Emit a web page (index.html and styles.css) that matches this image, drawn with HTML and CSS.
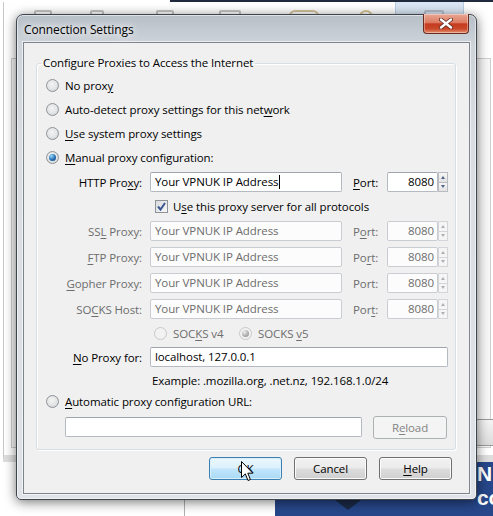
FILE: index.html
```html
<!DOCTYPE html>
<html lang="en">
<head>
    <meta charset="UTF-8">
    <title>Connection Settings</title>
    <link rel="stylesheet" href="styles.css">
</head>
<body>
<div class="desktop">
    <!-- options window behind the dialog -->
    <div class="bg-line"></div>
    <div class="bg-win">
        <div class="bg-tab"></div>
        <div class="bg-icons">
            <span class="ico i1"></span><span class="ico i2"></span><span class="ico i3"></span>
            <span class="ico i4"></span><span class="ico i5"></span><span class="ico i6"></span>
            <span class="ico i7"></span>
        </div>
        <div class="bg-panel">
            <div class="bg-btn"></div>
        </div>
    </div>
    <div class="bg-blue">
        <div class="bg-mark"></div>
        <div class="bg-text">N<br>co</div>
    </div>
    <div class="bg-vline"></div>

    <div class="dialog">
        <div class="titlebar">
            <span class="title">Connection Settings</span>
            <div class="close">
                <svg width="14" height="11" viewBox="0 0 14 11">
                    <path d="M2 1.5 L12 9.5 M12 1.5 L2 9.5" stroke="#5a2a20" stroke-width="4" stroke-linecap="round"/>
                    <path d="M2 1.5 L12 9.5 M12 1.5 L2 9.5" stroke="#fff" stroke-width="2.4" stroke-linecap="round"/>
                </svg>
            </div>
        </div>
        <div class="client">
            <fieldset class="group">
                <legend>Configure Proxies to Access the Internet</legend>

                <div class="opt"><span class="radio"></span><span>No prox<u>y</u></span></div>
                <div class="opt"><span class="radio"></span><span>Auto-detect proxy settings for this net<u>w</u>ork</span></div>
                <div class="opt"><span class="radio"></span><span><u>U</u>se system proxy settings</span></div>
                <div class="opt"><span class="radio on"></span><span><u>M</u>anual proxy configuration:</span></div>

                <div class="prow">
                    <span class="plabel">HTTP Pro<u>x</u>y:</span>
                    <div class="field host"><span>Your VPNUK IP Address</span><span class="caret"></span></div>
                    <span class="portlabel"><u>P</u>ort:</span>
                    <div class="field port">8080</div>
                    <div class="spin"><span class="up"></span><span class="down"></span></div>
                </div>

                <div class="checkrow">
                    <span class="check">
                        <svg width="11" height="11" viewBox="0 0 11 11"><path d="M2 5.5 L4.5 8.5 L9 2" fill="none" stroke="#3d5792" stroke-width="2"/></svg>
                    </span>
                    <span>U<u>s</u>e this proxy server for all protocols</span>
                </div>

                <div class="prow dis">
                    <span class="plabel">SS<u>L</u> Proxy:</span>
                    <div class="field host">Your VPNUK IP Address</div>
                    <span class="portlabel">P<u>o</u>rt:</span>
                    <div class="field port">8080</div>
                    <div class="spin"><span class="up"></span><span class="down"></span></div>
                </div>
                <div class="prow dis">
                    <span class="plabel"><u>F</u>TP Proxy:</span>
                    <div class="field host">Your VPNUK IP Address</div>
                    <span class="portlabel">Po<u>r</u>t:</span>
                    <div class="field port">8080</div>
                    <div class="spin"><span class="up"></span><span class="down"></span></div>
                </div>
                <div class="prow dis">
                    <span class="plabel"><u>G</u>opher Proxy:</span>
                    <div class="field host">Your VPNUK IP Address</div>
                    <span class="portlabel">Port:</span>
                    <div class="field port">8080</div>
                    <div class="spin"><span class="up"></span><span class="down"></span></div>
                </div>
                <div class="prow dis">
                    <span class="plabel">SO<u>C</u>KS Host:</span>
                    <div class="field host">Your VPNUK IP Address</div>
                    <span class="portlabel">Por<u>t</u>:</span>
                    <div class="field port">8080</div>
                    <div class="spin"><span class="up"></span><span class="down"></span></div>
                </div>

                <div class="socksrow dis">
                    <div class="socksopt"><span class="radio"></span><span>SOC<u>K</u>S v4</span></div>
                    <div class="socksopt"><span class="radio on"></span><span>SOCKS <u>v</u>5</span></div>
                </div>

                <div class="prow">
                    <span class="plabel"><u>N</u>o Proxy for:</span>
                    <div class="field wide">localhost, 127.0.0.1</div>
                </div>
                <div class="example">Example: .mozilla.org, .net.nz, 192.168.1.0/24</div>

                <div class="opt auto"><span class="radio"></span><span><u>A</u>utomatic proxy configuration URL:</span></div>
                <div class="urlrow">
                    <div class="field url"></div>
                    <button class="btn reload" disabled>R<u>e</u>load</button>
                </div>
            </fieldset>

            <div class="buttons">
                <button class="btn def">OK</button>
                <button class="btn">Cancel</button>
                <button class="btn"><u>H</u>elp</button>
            </div>
        </div>
    </div>

    <svg class="cursor" width="13" height="21" viewBox="0 0 13 21">
        <path d="M0.5 0.5 L0.5 16.5 L4.3 12.9 L7 19.5 L9.4 18.5 L6.8 12.2 L11.8 12.2 Z" fill="#fff" stroke="#000" stroke-width="1"/>
    </svg>
</div>
</body>
</html>
```

FILE: styles.css
```css
* { box-sizing: border-box; }
body { margin: 0; font-family: "Open Sans", "Noto Sans", sans-serif; font-size: 11.5px; letter-spacing: -0.1px; color: #000; }
u { text-decoration-thickness: 1px; text-underline-offset: 2px; }

.desktop { position: relative; width: 493px; height: 516px; overflow: hidden; background: #fff; }

/* background windows */
.bg-line { position: absolute; left: 170px; top: 0; width: 330px; height: 2px; background: #1f2b3c; }
.bg-win { position: absolute; left: 3px; top: 2px; width: 500px; height: 460px; border-left: 1px solid #c8c8c8; border-bottom: 7px solid #dedede; background: #fff; }
.bg-tab { position: absolute; left: 391px; top: 0; width: 69px; height: 44px; background: #dae6f4; border: 1px solid #b8cde6; border-top: 0; }
.bg-icons .ico { position: absolute; top: 8px; width: 18px; height: 12px; border: 2px solid #c4c4c4; border-radius: 2px; }
.bg-icons .i1 { left: 30px; }
.bg-icons .i2 { left: 86px; width: 14px; }
.bg-icons .i3 { left: 152px; }
.bg-icons .i4 { left: 215px; width: 22px; }
.bg-icons .i5 { left: 285px; width: 30px; border-radius: 8px; border-color: #d2c29a; }
.bg-icons .i6 { left: 355px; width: 14px; border-radius: 7px 7px 0 0; border-color: #d8c690; }
.bg-icons .i7 { left: 420px; width: 20px; border-color: #b4bcc8; }
.bg-panel { position: absolute; left: 7px; top: 56px; width: 480px; height: 390px; border: 1px solid #cfcfcf; background: #f7f7f7; }
.bg-btn { position: absolute; left: 463px; top: 360px; width: 30px; height: 27px; border: 1px solid #9a9a9a; border-radius: 3px; background: linear-gradient(#f4f4f4, #dcdcdc); }
.bg-blue { position: absolute; left: 275px; top: 462px; width: 218px; height: 54px; background: #27478a; }
.bg-mark { position: absolute; left: 60px; top: 38px; width: 26px; height: 10px; background: #1b2a48; clip-path: polygon(0 0, 100% 0, 50% 100%); }
.bg-text { position: absolute; left: 202px; top: 0; color: #fff; font-family: "Liberation Sans", sans-serif; font-weight: bold; font-size: 21px; line-height: 24px; }
.bg-vline { position: absolute; left: 184px; top: 500px; width: 1px; height: 16px; background: #b0b0b0; }

/* dialog */
.dialog {
    position: absolute; left: 16px; top: 14px; width: 461px; height: 486px;
    border: 1px solid #3f454c; border-radius: 7px 7px 5px 5px;
    background: linear-gradient(#b7bfc7, #cdd3d9 28px, #d9dde2 120px, #dfe2e6);
    box-shadow: 0 2px 12px rgba(0, 0, 0, 0.55), inset 0 0 0 1px rgba(255, 255, 255, 0.55);
    padding: 0 6px 5px 6px;
}
.titlebar { display: flex; justify-content: space-between; align-items: flex-start; height: 27px; }
.title { margin: 7px 0 0 1px; line-height: 16px; font-size: 12px; text-shadow: 0 0 6px #fff, 0 0 10px #fff; }
.close {
    width: 46px; height: 20px; margin: -1px 1px 0 0;
    display: flex; align-items: center; justify-content: center;
    border: 1px solid #6b2a1f; border-top: 0; border-radius: 0 0 4px 4px;
    background: linear-gradient(#e9a895 0%, #dc7b62 45%, #c63b1f 52%, #c9472a 78%, #e4906f 100%);
    box-shadow: inset 0 0 0 1px rgba(255, 255, 255, 0.35);
}
.client { height: 452px; border: 1px solid #7d848c; background: #f0f0f0; box-shadow: 0 0 0 1px rgba(255, 255, 255, 0.6); }

.group {
    margin: 12px 0 0 12px; width: 420px; min-width: 0;
    padding: 2px 0 5px 0;
    border: 1px solid #d5dfe5; border-radius: 3px;
    box-shadow: inset 1px 1px 0 #fff, 1px 1px 0 #fff;
}
.group legend { margin-left: 4px; padding: 0 2px; line-height: 16px; }

.opt { display: flex; align-items: center; gap: 6px; height: 24px; padding-left: 9px; }
.radio {
    position: relative; flex: none; width: 13px; height: 13px; border-radius: 50%;
    border: 1px solid #8e9398;
    background: radial-gradient(circle at 45% 40%, #f4f4f4 0%, #e2e3e4 55%, #c9cbcd 100%);
}
.radio.on::after {
    content: ""; position: absolute; left: 2px; top: 2px; width: 7px; height: 7px; border-radius: 50%;
    background: radial-gradient(circle at 35% 30%, #9bdcf7 0%, #2c76b8 50%, #123f78 100%);
}

.prow { display: flex; align-items: center; height: 26px; }
.plabel { width: 105px; margin-right: 8px; text-align: right; }
.field {
    height: 20px; padding: 0 4px; line-height: 18px; white-space: nowrap; overflow: hidden;
    background: #fff; border: 1px solid #b5bac2; border-top-color: #a0a5ad; border-radius: 2px;
}
.host { width: 192px; }
.caret { display: inline-block; width: 1px; height: 14px; margin-left: 1px; vertical-align: -3px; background: #000; }
.portlabel { width: 34px; margin-left: 11px; }
.port { width: 51px; text-align: right; padding-right: 3px; }
.spin { display: flex; flex-direction: column; width: 10px; height: 20px; }
.spin span { flex: 1; border: 1px solid #b8bcc2; background: linear-gradient(#f6f6f6, #e2e2e2); position: relative; }
.spin .down { border-top: 0; }
.spin span::after {
    content: ""; position: absolute; left: 2px; top: 3px;
    border-left: 2.5px solid transparent; border-right: 2.5px solid transparent;
}
.spin .up::after { border-bottom: 3px solid #4d6185; }
.spin .down::after { top: 2px; border-top: 3px solid #4d6185; }

.dis { color: #6d6d6d; }
.dis .field { color: #6d6d6d; border-color: #c9cdd2; background: #fcfcfc; }
.dis .spin span { border-color: #d3d5d8; background: #f5f5f5; }
.dis .spin .up::after { border-bottom-color: #b0b0b0; }
.dis .spin .down::after { border-top-color: #b0b0b0; }
.dis .radio { border-color: #c6c8ca; background: #f2f2f2; }
.dis .radio.on::after { background: radial-gradient(circle at 35% 30%, #f0f0f0 0%, #aaaaaa 60%, #8a8a8a 100%); }

.checkrow { display: flex; align-items: center; gap: 5px; height: 23px; padding-left: 118px; }
.check {
    flex: none; width: 13px; height: 13px; display: flex; align-items: center; justify-content: center;
    border: 1px solid #8e9398; background: linear-gradient(135deg, #d8dadc, #f8f8f8);
}

.socksrow { display: flex; align-items: center; height: 22px; padding-left: 117px; }
.socksopt { display: flex; align-items: center; gap: 6px; width: 85px; }

.wide { width: 298px; }
.example { height: 22px; line-height: 22px; padding-left: 115px; }
.opt.auto { height: 18px; }
.urlrow { display: flex; align-items: center; height: 34px; padding-left: 28px; }
.url { width: 297px; }

.btn {
    width: 73px; height: 23px; padding: 0; font: inherit; letter-spacing: inherit; color: #000;
    border: 1px solid #707070; border-radius: 3px;
    background: linear-gradient(#f2f2f2 0%, #ebebeb 48%, #dddddd 52%, #cfcfcf 100%);
    box-shadow: inset 0 0 0 1px #fbfbfb;
}
.btn.def {
    border-color: #3c7fb1;
    background: linear-gradient(#ecf7fd 0%, #dcf1fc 48%, #c1e6fc 52%, #a9d9f4 100%);
    box-shadow: inset 0 0 0 1px #d9f0fc;
}
.btn.reload { width: 74px; margin-left: 11px; color: #838383; border-color: #adb2b5; background: #f4f4f4; box-shadow: none; }
.buttons { display: flex; justify-content: flex-end; gap: 12px; margin-top: 7px; padding-right: 17px; }

.cursor { position: absolute; left: 241px; top: 461px; }
```
